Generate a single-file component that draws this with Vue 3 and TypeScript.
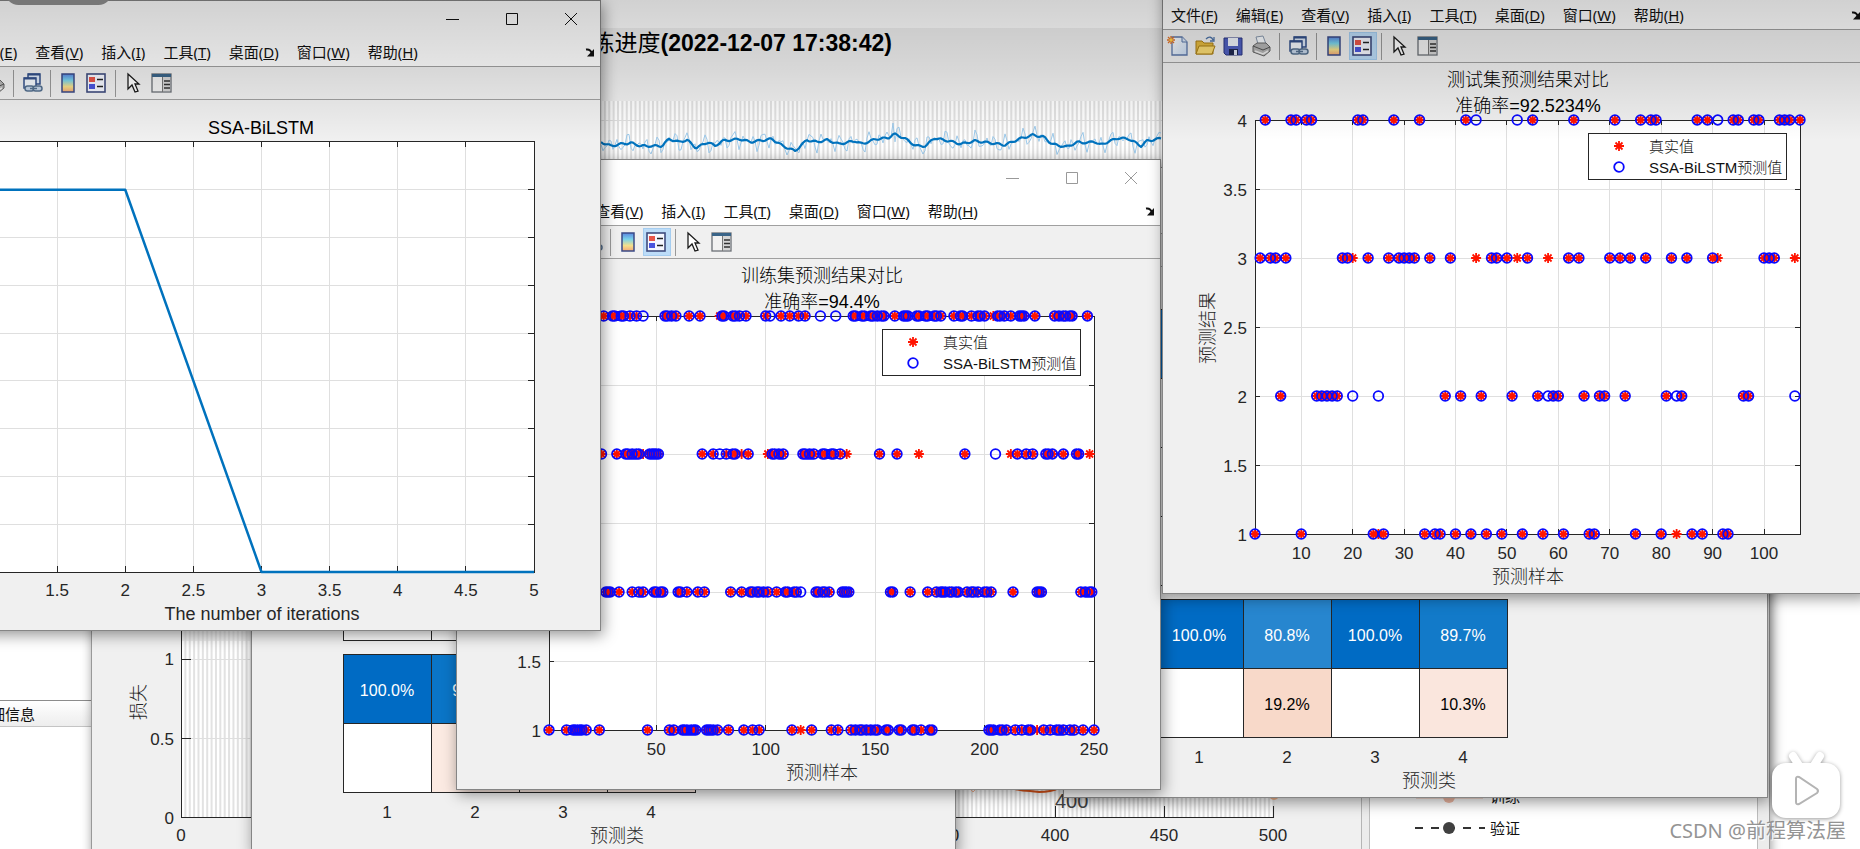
<script setup lang="ts">
type Point = [number, number]

interface Row {
  y: number
  both: number[]
  real: number[]
  pred: number[]
}

interface Cell {
  row: number
  col: number
  fill: string
  text?: string
  dark?: boolean
}

interface FigureWindow {
  id: string
  kind: 'line' | 'scatter' | 'matrix'
  name: string
  legendOn?: boolean
  inactive?: boolean
  title?: string[]
  xLabel: string
  yLabel?: string
  yTexts?: number[]
  xMin?: number
  xMax?: number
  xTicks?: number[]
  rows?: Row[]
  cells?: Cell[]
}

const menus: [string, string][] = [
  ['文件', 'F'],
  ['编辑', 'E'],
  ['查看', 'V'],
  ['插入', 'I'],
  ['工具', 'T'],
  ['桌面', 'D'],
  ['窗口', 'W'],
  ['帮助', 'H'],
]

const tools = [
  'new', 'open', 'save', 'print', '|', 'link', '|', 'colorbar', 'legend', '|', 'cursor', 'panel',
]

const toolNames: Record<string, string> = {
  new: '新建',
  open: '打开',
  save: '保存',
  print: '打印',
  link: '链接',
  colorbar: '颜色栏',
  legend: '图例',
  cursor: '编辑绘图',
  panel: '属性检查器',
}

const axes = { left: 92, right: 637, top: 157, bottom: 571 }

const testRows: Row[] = [
  {
    y: 4,
    both: [3, 8, 9, 11, 12, 21, 22, 28, 33, 42, 55, 63, 71, 76, 78, 79, 87, 89, 94, 95, 98, 99, 103, 104, 105, 107],
    real: [],
    pred: [44, 52, 91],
  },
  {
    y: 3,
    both: [2, 4, 5, 7, 18, 19, 23, 27, 29, 30, 31, 32, 35, 39, 47, 48, 50, 54, 62, 64, 70, 72, 74, 77, 82, 85, 90, 100, 101, 102],
    real: [20, 44, 52, 58, 91, 106],
    pred: [],
  },
  {
    y: 2,
    both: [6, 13, 14, 15, 16, 17, 38, 41, 45, 51, 56, 59, 60, 65, 68, 69, 73, 81, 84, 96, 97],
    real: [],
    pred: [20, 25, 58, 83, 106],
  },
  {
    y: 1,
    both: [1, 10, 24, 26, 34, 36, 37, 40, 43, 46, 49, 53, 57, 61, 66, 67, 75, 80, 86, 88, 92, 93],
    real: [25, 83],
    pred: [],
  },
]

const trainRows: Row[] = [
  {
    y: 4,
    both: [
      26, 30, 31, 34, 35, 38, 41, 54, 55, 57, 59, 65, 70, 80, 81, 85, 86, 88, 91, 100, 107, 111, 115, 118, 140, 141, 144,
      145, 148, 149, 151, 153, 154, 159, 163, 164, 165, 169, 170, 173, 174, 177, 178, 180, 186, 189, 190, 194, 197, 198,
      200, 206, 207, 209, 212, 216, 217, 218, 223, 232, 234, 236, 237, 239, 240, 247,
    ],
    real: [79, 204],
    pred: [44, 102, 125, 132],
  },
  {
    y: 3,
    both: [
      25, 32, 36, 37, 39, 41, 42, 47, 48, 49, 50, 51, 71, 76, 82, 85, 86, 92, 103, 104, 106, 108, 117, 118, 120, 122, 126,
      127, 130, 131, 134, 152, 160, 191, 215, 219, 222, 228, 229, 231, 236, 242, 243,
    ],
    real: [44, 89, 101, 137, 170, 212, 248],
    pred: [79, 205],
  },
  {
    y: 2,
    both: [
      27, 28, 29, 33, 39, 42, 44, 49, 50, 52, 53, 60, 61, 64, 69, 72, 84, 89, 93, 94, 96, 97, 99, 101, 105, 109, 110, 113,
      114, 123, 124, 126, 127, 129, 135, 136, 137, 138, 157, 158, 166, 174, 178, 180, 181, 182, 184, 185, 187, 188, 192,
      194, 195, 197, 200, 201, 203, 213, 224, 225, 226, 244, 246, 248, 249,
    ],
    real: [],
    pred: [116],
  },
  {
    y: 1,
    both: [
      1, 9, 12, 13, 14, 15, 16, 18, 24, 46, 56, 58, 62, 63, 64, 66, 67, 68, 73, 74, 75, 76, 78, 83, 90, 94, 97, 112, 121,
      130, 133, 139, 141, 143, 144, 146, 148, 150, 151, 155, 156, 161, 162, 167, 168, 171, 175, 176, 202, 203, 204, 207,
      208, 210, 214, 217, 220, 221, 227, 230, 233, 234, 236, 239, 241, 245, 250,
    ],
    real: [116, 224],
    pred: [],
  },
]

const windows: FigureWindow[] = [
  {
    id: 'train-matrix',
    kind: 'matrix',
    name: '训练集混淆矩阵',
    xLabel: '预测类',
    cells: [
      { row: 5, col: 0, fill: '#006bc4', text: '100.0%' },
      { row: 5, col: 1, fill: '#0a75c7', text: '93.2%' },
      { row: 5, col: 2, fill: '#0a75c7' },
      { row: 5, col: 3, fill: '#0a75c7' },
      { row: 6, col: 1, fill: '#fbeae2' },
      { row: 6, col: 2, fill: '#fbeae2' },
      { row: 6, col: 3, fill: '#fbeae2' },
    ],
  },
  {
    id: 'test-matrix',
    kind: 'matrix',
    name: '测试集混淆矩阵',
    xLabel: '预测类',
    cells: [
      { row: 0, col: 0, fill: '#006bc4' },
      { row: 5, col: 0, fill: '#006bc4', text: '100.0%' },
      { row: 5, col: 1, fill: '#2786cf', text: '80.8%' },
      { row: 5, col: 2, fill: '#006bc4', text: '100.0%' },
      { row: 5, col: 3, fill: '#127ac9', text: '89.7%' },
      { row: 6, col: 1, fill: '#f8d9c9', text: '19.2%', dark: true },
      { row: 6, col: 3, fill: '#fae6dd', text: '10.3%', dark: true },
    ],
  },
  {
    id: 'train-scatter',
    kind: 'scatter',
    name: '训练集预测结果对比',
    legendOn: true,
    inactive: true,
    title: ['训练集预测结果对比', '准确率=94.4%'],
    xLabel: '预测样本',
    yTexts: [1, 1.5],
    xMin: 1,
    xMax: 250,
    xTicks: [50, 100, 150, 200, 250],
    rows: trainRows,
  },
  {
    id: 'convergence',
    kind: 'line',
    name: 'SSA-BiLSTM',
    title: ['SSA-BiLSTM'],
    xLabel: 'The number of iterations',
    xMin: 1,
    xMax: 5,
    xTicks: [1.5, 2, 2.5, 3, 3.5, 4, 4.5, 5],
  },
  {
    id: 'test-scatter',
    kind: 'scatter',
    name: '测试集预测结果对比',
    legendOn: true,
    title: ['测试集预测结果对比', '准确率=92.5234%'],
    xLabel: '预测样本',
    yLabel: '预测结果',
    yTexts: [1, 1.5, 2, 2.5, 3, 3.5, 4],
    xMin: 1,
    xMax: 107,
    xTicks: [10, 20, 30, 40, 50, 60, 70, 80, 90, 100],
    rows: testRows,
  },
]

const innerTicks = [1.5, 2, 2.5, 3, 3.5]
const lineSteps = [1, 2, 3, 4, 5, 6, 7, 8]

function px(w: FigureWindow, v: number): number {
  const min = w.xMin ?? 0
  const max = w.xMax ?? 1
  return axes.left + ((v - min) / (max - min)) * (axes.right - axes.left)
}

function py(v: number): number {
  return axes.bottom - ((v - 1) / 3) * (axes.bottom - axes.top)
}

function lineY(step: number): number {
  return 572 - (step * 430) / 9
}

function star(x: number, y: number): string {
  return `M${x - 5} ${y}h10M${x} ${y - 5}v10M${x - 3.5} ${y - 3.5}l7 7M${x - 3.5} ${y + 3.5}l7 -7`
}

function ring(x: number, y: number): string {
  return `M${x - 4.8} ${y}a4.8 4.8 0 1 0 9.6 0a4.8 4.8 0 1 0 -9.6 0`
}

function stars(w: FigureWindow): string {
  return (w.rows ?? []).flatMap((r) => [...r.both, ...r.real].map((v) => star(px(w, v), py(r.y)))).join('')
}

function rings(w: FigureWindow): string {
  return (w.rows ?? []).flatMap((r) => [...r.both, ...r.pred].map((v) => ring(px(w, v), py(r.y)))).join('')
}

const colX = (c: number): number => 91 + c * 88
const rowY = (r: number): number => (r < 5 ? 142 + r * 69 : 432 + (r - 5) * 69)

/* Training progress */
const iterX = (i: number): number => 181 + i * 2.185
const epochs = Array.from({ length: 250 }, (_, k) => iterX((k + 1) * 2))

const trend: Point[] = [
  [601, 141], [611, 145], [621, 143], [631, 142], [641, 145], [662, 145], [669, 138], [679, 141], [687, 139], [696, 147],
  [708, 141], [715, 145], [722, 140], [740, 138], [750, 141], [772, 138], [783, 145], [795, 150], [807, 139], [817, 141],
  [827, 139], [839, 143], [855, 140], [862, 143], [876, 138], [888, 137], [894, 133], [904, 137], [916, 145], [926, 145],
  [934, 137], [949, 140], [961, 143], [975, 140], [991, 142], [1005, 144], [1019, 138], [1033, 134], [1044, 136],
  [1052, 143], [1066, 146], [1078, 141], [1088, 142], [1094, 140], [1100, 144], [1118, 137], [1129, 138], [1141, 145],
  [1147, 140], [1163, 137],
]

function trendAt(x: number): number {
  for (let i = 1; i < trend.length; i++) {
    const [x0, y0] = trend[i - 1]
    const [x1, y1] = trend[i]
    if (x <= x1) return y0 + ((y1 - y0) * (x - x0)) / (x1 - x0)
  }
  return trend[trend.length - 1][1]
}

const smooth: Point[] = []
const noisy: Point[] = []
for (let x = 601, k = 0; x < 1163; x += 2, k++) {
  const wave = Math.sin(k * 1.3) * 5 + Math.sin(k * 0.83) * 4 + Math.sin(k * 2.1 + 1) * 3
  noisy.push([x, Math.min(154, trendAt(x) + wave)])
  smooth.push([x, trendAt(x) + Math.sin(k * 1.1)])
}
noisy.splice(146, 1, [893, 122])

const toPoints = (list: Point[]): string => list.map((p) => p.join(',')).join(' ')
</script>

<template>
  <main class="desktop">
    <section class="details">
      <h2>详细信息</h2>
    </section>

    <section class="progress" aria-label="训练进度">
      <div class="progress-bar"></div>
      <svg class="progress-plot" viewBox="92 27 1677 832" width="1677" height="832">
        <defs>
          <linearGradient id="spectrum" x1="0" y1="0" x2="0" y2="1">
            <stop offset="0" stop-color="#5b86e0" />
            <stop offset="0.35" stop-color="#79d3ea" />
            <stop offset="0.7" stop-color="#f6e08a" />
            <stop offset="1" stop-color="#f3a878" />
          </linearGradient>
          <linearGradient id="sheet" x1="0" y1="0" x2="1" y2="1">
            <stop offset="0" stop-color="#ffffff" />
            <stop offset="1" stop-color="#c9dcf3" />
          </linearGradient>
        </defs>
        <text x="892" y="50" class="heading" text-anchor="end"><tspan class="cjk">训练进度</tspan>(2022-12-07 17:38:42)</text>

        <rect x="181" y="100" width="1093" height="300" fill="#fff" />
        <rect x="181" y="640" width="1093" height="177" fill="#fff" />
        <g class="stripe">
          <path v-for="x in epochs" :key="x" :d="`M${x} 100V400M${x} 600V817`" />
        </g>
        <path class="grid" d="M181 119.5H1274M181 658.5H1274M181 737.5H1274" />
        <polyline class="noisy" :points="toPoints(noisy)" />
        <polyline class="smooth" :points="toPoints(smooth)" />
        <path d="M1012 787q8 3 18 3l9 1q12 0 20-4" fill="none" stroke="#d95319" stroke-width="2" />
        <path d="M970 788l3 3 3-3" fill="none" stroke="#f0b090" stroke-width="1" />
        <circle cx="1274" cy="794" r="5" fill="#f3b48c" />
        <path class="axis" d="M181.5 600V816.5H1274M181 658.5h10M181 737.5h10M1055.5 816v-11M1164.5 816v-11M1273.5 816v-11" />
        <text x="1055" y="807" class="epoch">400</text>
        <g class="tick" text-anchor="end">
          <text x="174" y="664">1</text>
          <text x="174" y="744">0.5</text>
          <text x="174" y="823">0</text>
        </g>
        <g class="tick" text-anchor="middle">
          <text x="181" y="840">0</text>
          <text x="945" y="840">350</text>
          <text x="1055" y="840">400</text>
          <text x="1164" y="840">450</text>
          <text x="1273" y="840">500</text>
        </g>
        <text class="label" text-anchor="middle" transform="translate(145 701) rotate(-90)">损失</text>

        <rect x="1361" y="640" width="408" height="230" fill="#ececec" />
        <rect x="1369.5" y="640" width="388" height="230" fill="#fff" stroke="#bdbdbd" />
        <path d="M1361.5 640V870" stroke="#b5b5b5" />
        <path d="M1416 796.500h67" stroke="#f2c3b0" stroke-width="2" />
        <circle cx="1449" cy="796" r="6" fill="#f0b9a4" />
        <text x="1490" y="801" class="small">训练</text>
        <path d="M1415 827h70" stroke="#333" stroke-width="2" stroke-dasharray="8 8" />
        <circle cx="1449" cy="827" r="6" fill="#404040" />
        <text x="1490" y="833" class="small">验证</text>
      </svg>
    </section>

    <section
      v-for="w in windows"
      :key="w.id"
      class="window"
      :class="[w.id, { inactive: w.inactive }]"
      :aria-label="w.name"
    >
      <header class="titlebar">
        <template v-if="w.kind !== 'matrix'">
          <button type="button" aria-label="最小化">
            <svg width="14" height="14"><path d="M0 7.500h13" /></svg>
          </button>
          <button type="button" aria-label="最大化">
            <svg width="14" height="14"><path d="M1.500 1.500h11v11h-11z" /></svg>
          </button>
          <button type="button" aria-label="关闭">
            <svg width="14" height="14"><path d="M1 1l12 12M13 1L1 13" /></svg>
          </button>
        </template>
      </header>
      <nav class="menubar">
        <template v-if="w.kind !== 'matrix'">
          <button v-for="m in menus" :key="m[1]" type="button">{{ m[0] }}(<u>{{ m[1] }}</u>)</button>
          <svg class="dock" width="10" height="9" viewBox="0 0 10 9">
            <path d="M1 1.500c3-.5 5 1 6 4" fill="none" stroke="#111" stroke-width="2" />
            <path d="M9 1v7.500H2z" fill="#111" />
          </svg>
        </template>
      </nav>
      <div class="toolbar">
        <template v-if="w.kind !== 'matrix'">
          <template v-for="(t, i) in tools" :key="i">
            <span v-if="t === '|'" class="divider"></span>
            <button v-else type="button" :aria-label="toolNames[t]" :class="{ on: t === 'legend' && w.legendOn }">
              <svg width="22" height="22" viewBox="0 0 22 22">
                <template v-if="t === 'new'">
                  <path d="M6 2h10l5 5v13H6z" fill="url(#sheet)" stroke="#5b76a8" stroke-width="1.300" />
                  <path d="M16 2v5h5" fill="#dbe8f8" stroke="#5b76a8" />
                  <path d="M5 1v8M1 5h8M2 2l6 6M8 2L2 8" stroke="#e07028" stroke-width="1.300" />
                  <circle cx="5" cy="5" r="1.800" fill="#ffd24a" />
                </template>
                <template v-else-if="t === 'open'">
                  <path d="M2 19V6h6l2 2h9v11z" fill="#e4b93e" stroke="#a97f16" />
                  <path d="M2 19l3-8h16l-3 8z" fill="#fbdc74" stroke="#a97f16" />
                  <path d="M12 4c3-3 6-2 7 1M20 2v4h-4" fill="none" stroke="#4f74a8" stroke-width="1.300" />
                </template>
                <template v-else-if="t === 'save'">
                  <path d="M2 3h18v17H4l-2-2z" fill="#4f60c0" stroke="#2a3580" />
                  <path d="M6 3h10v8H6z" fill="#eef3fb" />
                  <path d="M7 14h9v6H7z" fill="#20284f" />
                  <path d="M12 15h3v5h-3z" fill="#dfe5f3" />
                </template>
                <template v-else-if="t === 'print'">
                  <path d="M6 2l7-1 3 8H8z" fill="#f7fafd" stroke="#8898ad" />
                  <path d="M3 11l4-3h9l4 4v4l-6 5-11-4z" fill="#b4b4b4" stroke="#666" />
                  <path d="M3 11l10 4 7-3" fill="none" stroke="#555" />
                  <path d="M5 16l8 3 5-3" fill="none" stroke="#eee" stroke-width="1.500" />
                </template>
                <template v-else-if="t === 'link'">
                  <path d="M7 2h12v10H7z" fill="#dbe6f5" stroke="#324f88" stroke-width="1.500" />
                  <path d="M3 6h12v10H3z" fill="#f3f7fc" stroke="#324f88" stroke-width="1.500" />
                  <path d="M3 6.500h12M7 2.500h12" stroke="#324f88" stroke-width="2" />
                  <rect x="4" y="14" width="9" height="5" rx="2.500" fill="#c5d5e8" stroke="#55708f" stroke-width="1.500" />
                  <rect x="12" y="14" width="9" height="5" rx="2.500" fill="#c5d5e8" stroke="#55708f" stroke-width="1.500" />
                  <path d="M9 16.500h7" stroke="#55708f" stroke-width="1.500" />
                </template>
                <template v-else-if="t === 'colorbar'">
                  <rect x="4" y="2" width="12" height="18" fill="url(#spectrum)" stroke="#3a4a86" stroke-width="1.500" />
                </template>
                <template v-else-if="t === 'legend'">
                  <rect x="1" y="2" width="18" height="18" fill="#f5f7ff" stroke="#3f4c7d" stroke-width="1.600" />
                  <rect x="3" y="5" width="6" height="5" fill="#e85548" />
                  <rect x="3" y="12" width="6" height="5" fill="#4a55dd" />
                  <path d="M11 7.500h6M11 14.500h6" stroke="#222" stroke-width="1.500" />
                </template>
                <template v-else-if="t === 'cursor'">
                  <path d="M5 2v15l4-4 3 7 3-1-3-7h4z" fill="#fff" stroke="#1a1a1a" stroke-width="1.300" />
                </template>
                <template v-else>
                  <rect x="1" y="2" width="19" height="18" fill="#f2f2f2" stroke="#6a6f75" stroke-width="1.300" />
                  <rect x="1" y="2" width="19" height="3" fill="#3a6488" />
                  <rect x="12" y="5" width="7" height="14" fill="#d5d5d5" />
                  <path d="M11.500 5v15" stroke="#777" />
                  <path d="M13 9h6M13 12.500h6M13 16h6" stroke="#333" stroke-width="1.300" />
                </template>
              </svg>
            </button>
          </template>
        </template>
      </div>

      <svg class="figure" viewBox="0 100 703 530">
        <template v-if="w.kind === 'line'">
          <rect x="91" y="141" width="546" height="431" fill="#fff" />
          <path v-for="s in lineSteps" :key="s" class="grid" :d="`M91 ${lineY(s)}H637`" />
          <path v-for="v in w.xTicks" :key="v" class="grid" :d="`M${px(w, v)} 141V571`" />
          <path class="axis" d="M91 141.500H637M91 572.500H637M637.500 141V573" />
          <path v-for="s in lineSteps" :key="'r' + s" class="axis" :d="`M637 ${lineY(s)}h-6`" />
          <path v-for="v in w.xTicks" :key="'t' + v" class="axis" :d="`M${px(w, v)} 141v6M${px(w, v)} 572v-6`" />
          <polyline
            class="curve"
            :points="`${px(w, 1)},${lineY(8)} ${px(w, 2)},${lineY(8)} ${px(w, 3)},572 ${px(w, 5)},572`"
          />
          <text x="364" y="134" class="title" text-anchor="middle">{{ w.title?.[0] }}</text>
        </template>

        <template v-else-if="w.kind === 'scatter'">
          <rect x="92" y="157" width="545" height="414" fill="#fff" />
          <path v-for="v in innerTicks" :key="v" class="grid" :d="`M92 ${py(v)}H637`" />
          <path v-for="v in w.xTicks" :key="'x' + v" class="grid" :d="`M${px(w, v)} 157V571`" />
          <rect class="axis" x="92.5" y="157.5" width="545" height="414" />
          <path v-for="v in innerTicks" :key="'y' + v" class="axis" :d="`M92 ${py(v)}h5M637 ${py(v)}h-5`" />
          <path v-for="v in w.xTicks" :key="'t' + v" class="axis" :d="`M${px(w, v)} 157v5M${px(w, v)} 571v-5`" />
          <path class="stars" :d="stars(w)" />
          <path class="rings" :d="rings(w)" />
          <text v-for="(t, i) in w.title" :key="t" x="365" :y="123 + i * 26" class="title" text-anchor="middle">{{ t }}</text>
          <g class="tick" text-anchor="end">
            <text v-for="v in w.yTexts" :key="v" x="84" :y="py(v) + 7">{{ v }}</text>
          </g>
          <text v-if="w.yLabel" class="label" text-anchor="middle" transform="translate(51 365) rotate(-90)">{{ w.yLabel }}</text>
          <rect x="425.500" y="170.500" width="198" height="46" fill="#fff" stroke="#262626" />
          <path class="stars" :d="star(456, 183)" />
          <path class="rings" :d="ring(456, 204)" />
          <text x="486" y="189" class="key">真实值</text>
          <text x="486" y="210" class="key">SSA-BiLSTM预测值</text>
        </template>

        <template v-else>
          <rect x="91" y="142" width="352" height="276" fill="#fff" />
          <rect x="91" y="432" width="352" height="138" fill="#fff" />
          <rect
            v-for="c in w.cells"
            :key="c.row + '-' + c.col"
            :x="colX(c.col)"
            :y="rowY(c.row)"
            width="88"
            height="69"
            :fill="c.fill"
          />
          <path
            class="axis"
            d="M91.500 142.500h352v276h-352zM91.500 211.500h352M91.500 280.500h352M91.500 349.500h352M91.500 432.500h352v138h-352zM91.500 501.500h352M179.500 142v276M267.500 142v276M355.500 142v276M179.500 432v138M267.500 432v138M355.500 432v138"
          />
          <template v-for="c in w.cells" :key="'v' + c.row + c.col">
            <text
              v-if="c.text"
              :x="colX(c.col) + 44"
              :y="rowY(c.row) + 42"
              class="cell"
              :class="{ dark: c.dark }"
              text-anchor="middle"
            >{{ c.text }}</text>
          </template>
          <g class="tick" text-anchor="middle">
            <text v-for="n in 4" :key="n" :x="colX(n - 1) + 44" y="596">{{ n }}</text>
          </g>
        </template>

        <g class="tick" text-anchor="middle">
          <text v-for="v in w.xTicks" :key="v" :x="px(w, v)" y="596">{{ v }}</text>
        </g>
        <text x="365" y="620" class="label" text-anchor="middle">{{ w.xLabel }}</text>
      </svg>
    </section>

    <div class="shade"></div>
    <div class="pill"></div>

    <div class="brand">
      <svg width="80" height="76" viewBox="0 0 80 76" aria-hidden="true">
        <path d="M27 8l7 11M54 8l-7 11" stroke="#fff" stroke-width="8" stroke-linecap="round" />
        <rect x="6" y="15" width="68" height="55" rx="14" fill="#fff" />
        <path d="M30 31q0-3 3-2l18 12q2 2 0 4L33 56q-3 1-3-2z" fill="#fff" stroke="#b4b4b4" stroke-width="2" />
      </svg>
      <p>CSDN @前程算法屋</p>
    </div>
  </main>
</template>

<style>
html,
body {
  margin: 0;
  overflow: hidden;
  background: #fff;
}
</style>

<style scoped>
.desktop {
  position: relative;
  width: 100%;
  height: 100vh;
  overflow: hidden;
  background: #fff;
  color: #111;
  font-family: "Noto Sans", "Noto Sans CJK SC", sans-serif;
  font-size: 15px;
}

.details {
  position: absolute;
  left: -25px;
  top: 700px;
}

.details h2 {
  box-sizing: border-box;
  width: 160px;
  height: 27px;
  margin: 0;
  border-top: 1px solid #8c8c8c;
  border-bottom: 1px solid #c4c4c4;
  background: linear-gradient(#fff, #ededed);
  font-size: 15px;
  font-weight: 400;
  line-height: 26px;
}

.progress {
  position: absolute;
  left: 91px;
  top: -10px;
  border: 1px solid #999;
  background: #f0f0f0;
  box-shadow: 1px 2px 10px rgba(0, 0, 0, 0.4);
}

.progress-bar {
  height: 37px;
  background: #fff;
}

.progress-plot,
.figure {
  display: block;
}

.window {
  position: absolute;
  box-sizing: border-box;
  width: 705px;
  border: 1px solid #858585;
  background: #f0f0f0;
  box-shadow: 2px 4px 14px rgba(0, 0, 0, 0.42);
}

.train-matrix {
  left: 251px;
  top: 222px;
}

.test-matrix {
  left: 1063px;
  top: 167px;
}

.train-scatter {
  left: 456px;
  top: 159px;
}

.convergence {
  left: -104px;
  top: 0;
}

.test-scatter {
  left: 1162px;
  top: -37px;
}

button {
  padding: 0;
  border: 0;
  background: none;
  color: inherit;
  font: inherit;
}

.titlebar {
  display: flex;
  justify-content: flex-end;
  height: 37px;
  background: #fff;
}

.titlebar button {
  display: flex;
  align-items: center;
  justify-content: center;
  width: 59px;
  height: 35px;
}

.titlebar path {
  fill: none;
  stroke: #111;
  stroke-width: 1;
}

.inactive .titlebar path {
  stroke: #999;
}

.menubar {
  display: flex;
  align-items: center;
  gap: 18px;
  height: 28px;
  padding-left: 8px;
  border-bottom: 1px solid #a0a0a0;
  background: #fff;
  line-height: 28px;
  white-space: nowrap;
}

.dock {
  margin-left: auto;
  margin-right: 5px;
}

.toolbar {
  display: flex;
  align-items: center;
  height: 32px;
  border-bottom: 1px solid #a0a0a0;
}

.toolbar button {
  display: flex;
  align-items: center;
  justify-content: center;
  box-sizing: border-box;
  width: 28px;
  height: 28px;
  border: 1px solid transparent;
}

.toolbar button.on {
  border-color: #a5cdf0;
  background: #bcdcf8;
}

.divider {
  width: 1px;
  height: 27px;
  margin: 0 4px;
  background: #999;
}

.figure {
  width: 100%;
}

svg text {
  font-family: "Liberation Sans", "Noto Sans CJK SC", sans-serif;
}

.heading {
  font-size: 23px;
  font-weight: 700;
  fill: #000;
}

.heading .cjk {
  font-weight: 400;
}

.title {
  font-size: 18px;
  fill: #000;
}

.label {
  font-size: 18px;
  fill: #262626;
}

.title,
.label,
.key {
  font-weight: 300;
}

.tick {
  font-size: 17px;
  fill: #262626;
}

.cell {
  font-size: 16px;
  fill: #fff;
}

.cell.dark {
  fill: #000;
}

.key,
.small {
  font-size: 15px;
  fill: #111;
}

.epoch {
  font-size: 20px;
  fill: #444;
}

.grid {
  fill: none;
  stroke: #dfdfdf;
  stroke-width: 1;
  shape-rendering: crispEdges;
}

.axis {
  fill: none;
  stroke: #262626;
  stroke-width: 1;
  shape-rendering: crispEdges;
}

.stripe {
  stroke: #e2e2e2;
  stroke-width: 2;
}

.noisy {
  fill: none;
  stroke: #9cc9ea;
  stroke-width: 1;
}

.smooth {
  fill: none;
  stroke: #0072bd;
  stroke-width: 2.2;
  stroke-linejoin: round;
}

.curve {
  fill: none;
  stroke: #0072bd;
  stroke-width: 2.5;
  stroke-linejoin: round;
}

.stars {
  fill: none;
  stroke: #ff1400;
  stroke-width: 1.8;
}

.rings {
  fill: none;
  stroke: #0a0aff;
  stroke-width: 1.8;
}

.shade {
  position: absolute;
  inset: 0 0 auto;
  height: 140px;
  background: linear-gradient(rgba(0, 0, 0, 0.18), rgba(0, 0, 0, 0.1) 50%, rgba(0, 0, 0, 0));
  pointer-events: none;
}

.pill {
  position: absolute;
  left: 5px;
  top: -22px;
  width: 107px;
  height: 27px;
  border-radius: 14px;
  background: #777;
}

.brand {
  position: absolute;
  right: 14px;
  bottom: 4px;
  display: flex;
  flex-direction: column;
  align-items: flex-end;
}

.brand svg {
  filter: drop-shadow(0 1px 2px rgba(0, 0, 0, 0.4));
}

.brand p {
  margin: -7px 0 0;
  color: #949494;
  font-size: 20px;
  line-height: 28px;
  text-shadow: 1px 1px 1px #fff;
}
</style>
